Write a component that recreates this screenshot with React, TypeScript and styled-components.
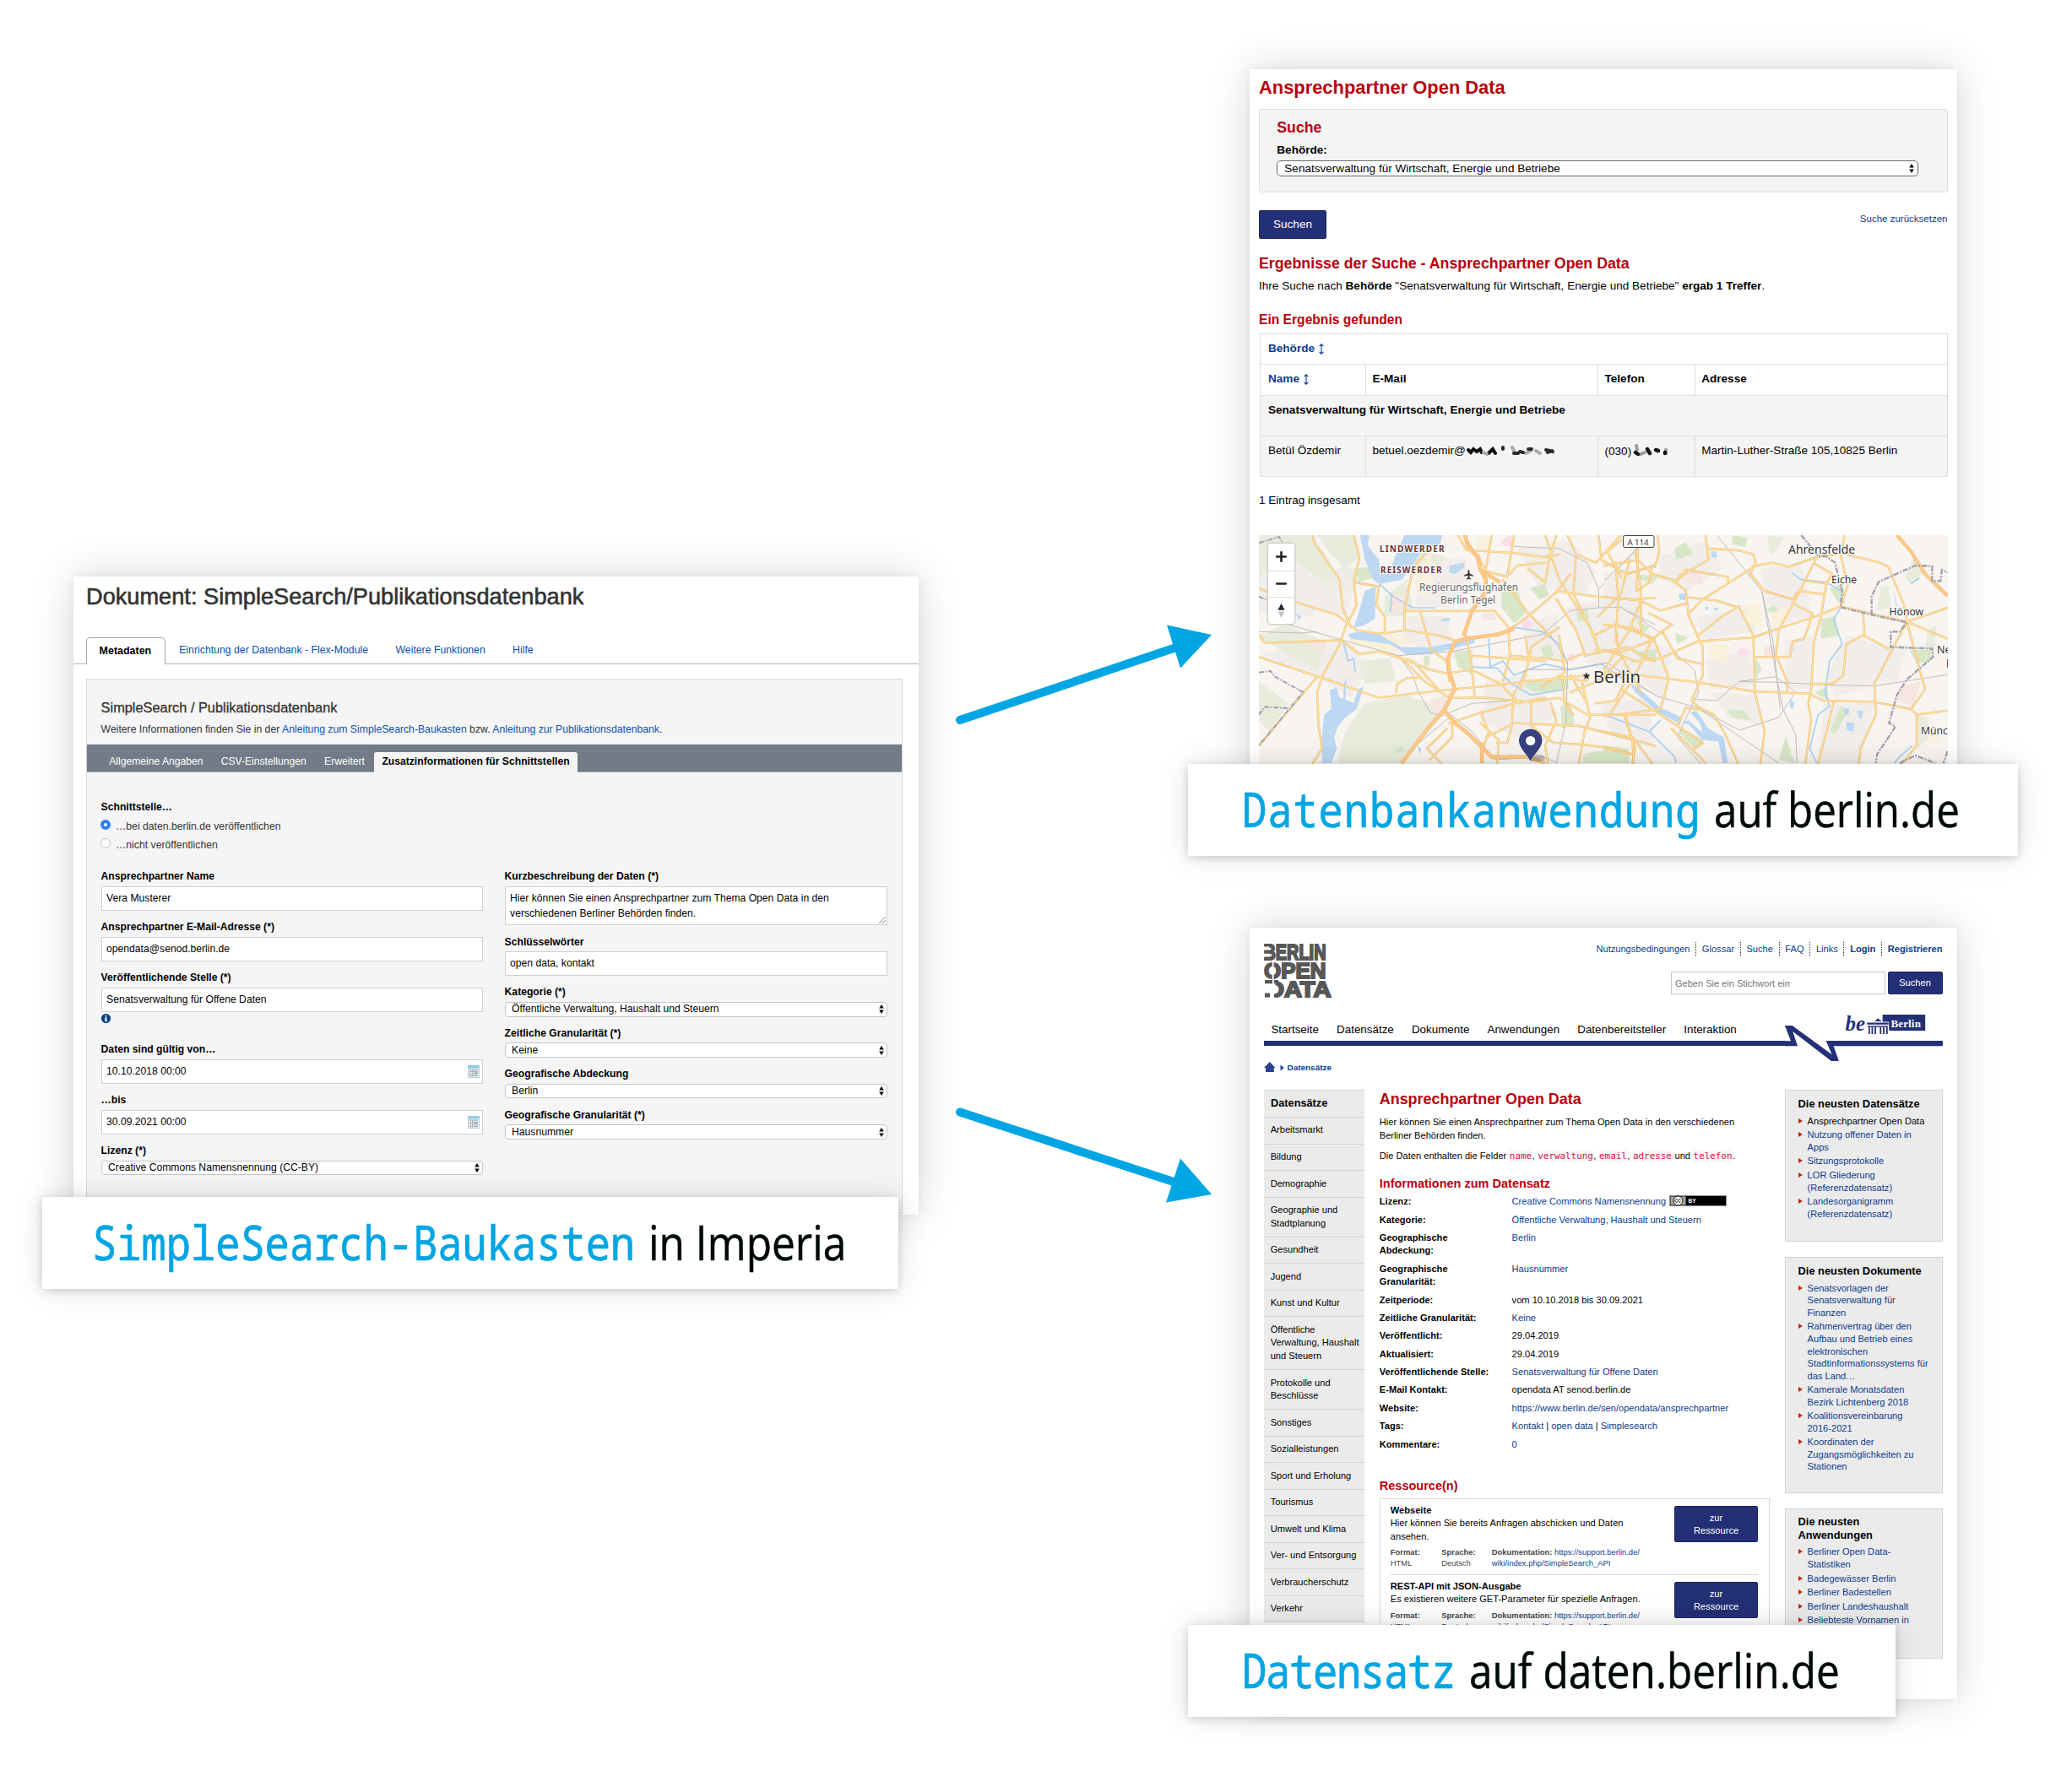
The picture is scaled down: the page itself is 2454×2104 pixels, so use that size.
import React from "react";
import styled, { createGlobalStyle, css } from "styled-components";

const SANS = '"Liberation Sans", Arial, sans-serif';
const CYAN = "#00a5e3";
const NAVY = "#243075";
const RED = "#b8000d";
const LINK = "#0b3b8c";

const GlobalStyle = createGlobalStyle`
  * { box-sizing: border-box; }
  html, body { margin: 0; padding: 0; background: #fff; }
  body { font-family: ${SANS}; color: #000; }
`;

/* ---------- canvas ---------- */

const Canvas = styled.main`
  display: grid;
  grid-template-columns: 1088px 269px 1fr;
  width: 2454px;
  height: 2104px;
  padding-left: 50px;
  overflow: hidden;
`;
const Column = styled.div<{ $top: number }>`
  padding-top: ${p => p.$top}px;
`;
const Card = styled.section<{ $left: number; $width: number; $height: number }>`
  margin-left: ${p => p.$left}px;
  width: ${p => p.$width}px;
  height: ${p => p.$height}px;
  background: #fff;
  box-shadow: 0 0 46px rgba(0, 0, 0, 0.16), 0 0 8px rgba(0, 0, 0, 0.06);
`;
const Banner = styled.h2<{ $width: number; $pull: number; $after?: number }>`
  position: relative;
  display: flex;
  align-items: flex-start;
  width: ${p => p.$width}px;
  height: 109.4px;
  margin: ${p => -p.$pull}px 0 ${p => p.$after || 0}px;
  padding: 13.4px 0 0 60px;
  background: #fff;
  box-shadow: 0 0 36px rgba(0, 0, 0, 0.12), 0 2px 10px rgba(0, 0, 0, 0.16);
  font-size: 56px;
  line-height: 80px;
  font-weight: 400;
  white-space: pre;
`;
const BannerKey = styled.span<{ $width: number; $track: number; $indent: number }>`
  width: ${p => p.$width - p.$indent}px;
  margin-left: ${p => p.$indent}px;
  font-family: "Noto Sans Mono", "DejaVu Sans Mono", monospace;
  color: ${CYAN};
  letter-spacing: ${p => p.$track}px;
  -webkit-text-stroke: 0.7px ${CYAN};
  transform: scaleX(0.87);
  transform-origin: left center;
`;
const BannerRest = styled.span<{ $scale: number }>`
  font-family: "Open Sans", "Noto Sans", sans-serif;
  color: #000a05;
  -webkit-text-stroke: 0.5px #000a05;
  transform: scaleX(${p => p.$scale});
  transform-origin: left center;
`;
const ArrowLayer = styled.svg`
  display: block;
  overflow: visible;
`;

/* ---------- shared bits ---------- */

const Link = styled.a<{ $bright?: boolean }>`
  color: ${p => (p.$bright ? "#0950b4" : LINK)};
  text-decoration: none;
`;
const ArrowsSvg = styled.svg`
  flex: none;
  width: 6px;
  height: 11px;
`;
const UpDown = () => (
  <ArrowsSvg viewBox="0 0 6 11">
    <path d="M3 0 5.8 4.4H.2ZM3 11 .2 6.6h5.6Z" fill="#000" />
  </ArrowsSvg>
);
const Select = styled.div<{ $dark?: boolean; $width: number }>`
  display: flex;
  align-items: center;
  justify-content: space-between;
  width: ${p => p.$width}px;
  height: ${p => (p.$dark ? 19.3 : 17.6)}px;
  padding: 0 ${p => (p.$dark ? 4 : 3)}px 0 ${p => (p.$dark ? 8 : 7.5)}px;
  border: 1px solid ${p => (p.$dark ? "#6b6b6b" : "#c6c6c6")};
  border-radius: ${p => (p.$dark ? 5 : 4)}px;
  background: #fff;
  font-size: ${p => (p.$dark ? 13.57 : 12.15)}px;
  line-height: 17px;
`;

/* ---------- Imperia form ---------- */

const DocTitle = styled.h1`
  margin: 0;
  padding: 3.6px 0 0 15px;
  font-size: 27.2px;
  line-height: 40px;
  font-weight: 400;
  color: #333;
  -webkit-text-stroke: 0.6px #333;
`;
const Tabs = styled.nav`
  display: flex;
  height: 32px;
  margin-top: 28px;
  padding-left: 14.6px;
  border-bottom: 1px solid #b4b4b4;
  font-size: 12.29px;
  line-height: 31px;
`;
const Tab = styled.a<{ $active?: boolean }>`
  padding: 0 16.2px;
  color: #0950b4;
  ${p =>
    p.$active &&
    css`
      height: 32px;
      width: 94.4px;
      padding: 0 15px;
      border: 1px solid #a8a8a8;
      border-bottom: 0;
      border-radius: 5px 5px 0 0;
      background: #fff;
      color: #000;
      font-size: 12.46px;
      font-weight: 700;
    `}
`;
const Panel = styled.div`
  width: 967px;
  height: 634px;
  margin: 17.4px 0 0 14.6px;
  padding-top: 21.2px;
  border: 1px solid #d8d8d8;
  background: #f5f5f5;
`;
const PanelTitle = styled.h3`
  margin: 0;
  padding-left: 17px;
  font-size: 16.35px;
  line-height: 24px;
  font-weight: 400;
  color: #333;
  -webkit-text-stroke: 0.3px #333;
`;
const PanelInfo = styled.p`
  margin: 3.6px 0 8.3px;
  padding-left: 17px;
  font-size: 12.22px;
  line-height: 20px;
  color: #333;
`;
const SubTabs = styled.nav`
  display: flex;
  align-items: flex-end;
  height: 33px;
  padding-left: 16px;
  background: #747b88;
  box-shadow: inset 0 -1px #a3a3a3;
  font-size: 12.12px;
  line-height: 23px;
  color: #fff;
`;
const SubTab = styled.a<{ $active?: boolean }>`
  height: 24px;
  padding: 0 10.7px;
  ${p =>
    p.$active &&
    css`
      margin-left: 0.8px;
      padding: 0 9px;
      border-radius: 3px 3px 0 0;
      background: #f5f5f5;
      color: #000;
      font-size: 12.17px;
      font-weight: 700;
    `}
`;
const Form = styled.div`
  padding: 32px 17px 0;
  font-size: 12.15px;
`;
const Label = styled.label`
  display: block;
  margin-bottom: 2.5px;
  font-size: 12.16px;
  line-height: 18px;
  font-weight: 700;
`;
const RadioRow = styled.div`
  display: flex;
  gap: 6.5px;
  height: 21.6px;
  line-height: 21.6px;
  font-size: 12.22px;
  color: #333;
`;
const Radio = styled.i<{ $on?: boolean }>`
  width: 12px;
  height: 12px;
  margin-top: 2px;
  border-radius: 50%;
  ${p =>
    p.$on
      ? css`
          border: 4px solid #2f7ff5;
          background: #fff;
        `
      : css`
          border: 1px solid #c4c4c4;
          background: #fff;
        `}
`;
const Radios = styled.div`
  margin: 4px 0 17px -1px;
`;
const FormGrid = styled.div`
  display: grid;
  grid-template-columns: 452px 453px;
  column-gap: 26px;
`;
const Field = styled.div`
  margin-bottom: 10.4px;
`;
const Input = styled.div<{ $lines?: number }>`
  display: flex;
  align-items: flex-start;
  justify-content: space-between;
  height: ${p => (p.$lines === 2 ? 46.4 : 29)}px;
  margin-left: 0.5px;
  padding: 5.4px 3px 0 5px;
  border: 1px solid #cfcfcf;
  background: #fff;
  line-height: 17.5px;
  white-space: pre;
`;
const Grip = styled.svg`
  align-self: flex-end;
  width: 8px;
  height: 8px;
  margin: 0 -2px 1px 0;
`;
const InfoLine = styled.div`
  height: 25.4px;
  margin-top: -10.4px;
  margin-bottom: 10.4px;
  padding-top: 2.6px;
  line-height: 0;
`;
const CalSvg = styled.svg`
  width: 14px;
  height: 15px;
  margin-top: 1px;
`;
const Calendar = () => (
  <CalSvg viewBox="0 0 14 15">
    <rect x=".5" y=".5" width="13" height="14" fill="#e9eef1" stroke="#c3ccd2" />
    <rect width="14" height="3.4" fill="#93cbe6" />
    <rect x="3" y="5" width="8" height="7.6" fill="#fff" stroke="#9aa7b0" />
    <path d="M5.7 5v7.6M8.3 5v7.6M3 7.5h8M3 10h8" stroke="#9aa7b0" strokeWidth=".9" />
    <rect x="8.6" y="7.8" width="2" height="2" fill="#7fb4d0" />
  </CalSvg>
);

function ImperiaCard() {
  return (
    <Card $left={37} $width={1001} $height={756}>
      <DocTitle>Dokument: SimpleSearch/Publikationsdatenbank</DocTitle>
      <Tabs>
        <Tab $active>Metadaten</Tab>
        <Tab>Einrichtung der Datenbank - Flex-Module</Tab>
        <Tab>Weitere Funktionen</Tab>
        <Tab>Hilfe</Tab>
      </Tabs>
      <Panel>
        <PanelTitle>SimpleSearch / Publikationsdatenbank</PanelTitle>
        <PanelInfo>
          Weitere Informationen finden Sie in der <Link $bright>Anleitung zum SimpleSearch-Baukasten</Link> bzw.{" "}
          <Link $bright>Anleitung zur Publikationsdatenbank</Link>.
        </PanelInfo>
        <SubTabs>
          <SubTab>Allgemeine Angaben</SubTab>
          <SubTab>CSV-Einstellungen</SubTab>
          <SubTab>Erweitert</SubTab>
          <SubTab $active>Zusatzinformationen für Schnittstellen</SubTab>
        </SubTabs>
        <Form>
          <Label>Schnittstelle…</Label>
          <Radios>
            <RadioRow><Radio $on />…bei daten.berlin.de veröffentlichen</RadioRow>
            <RadioRow><Radio />…nicht veröffentlichen</RadioRow>
          </Radios>
          <FormGrid>
            <div>
              <Field><Label>Ansprechpartner Name</Label><Input>Vera Musterer</Input></Field>
              <Field><Label>Ansprechpartner E-Mail-Adresse (*)</Label><Input>opendata@senod.berlin.de</Input></Field>
              <Field><Label>Veröffentlichende Stelle (*)</Label><Input>Senatsverwaltung für Offene Daten</Input></Field>
              <InfoLine>
                <svg width="11" height="11" viewBox="0 0 11 11">
                  <circle cx="5.5" cy="5.5" r="5.5" fill="#003a85" />
                  <path d="M4.5 2h2v1.6h-2ZM3.9 4.4h2.6v3.5h.7V9H3.9V7.9h.7V5.5h-.7Z" fill="#fff" />
                </svg>
              </InfoLine>
              <Field><Label>Daten sind gültig von…</Label><Input>10.10.2018 00:00<Calendar /></Input></Field>
              <Field><Label>…bis</Label><Input>30.09.2021 00:00<Calendar /></Input></Field>
              <Field><Label>Lizenz (*)</Label><Select $width={452}>Creative Commons Namensnennung (CC-BY)<UpDown /></Select></Field>
            </div>
            <div>
              <Field>
                <Label>Kurzbeschreibung der Daten (*)</Label>
                <Input $lines={2}>
                  {"Hier können Sie einen Ansprechpartner zum Thema Open Data in den\nverschiedenen Berliner Behörden finden."}
                  <Grip viewBox="0 0 8 8"><path d="M0 8 8 0M4 8l4-4" stroke="#777" strokeWidth=".9" /></Grip>
                </Input>
              </Field>
              <Field><Label>Schlüsselwörter</Label><Input>open data, kontakt</Input></Field>
              <Field><Label>Kategorie (*)</Label><Select $width={453}>Öffentliche Verwaltung, Haushalt und Steuern<UpDown /></Select></Field>
              <Field><Label>Zeitliche Granularität (*)</Label><Select $width={453}>Keine<UpDown /></Select></Field>
              <Field><Label>Geografische Abdeckung</Label><Select $width={453}>Berlin<UpDown /></Select></Field>
              <Field><Label>Geografische Granularität (*)</Label><Select $width={453}>Hausnummer<UpDown /></Select></Field>
            </div>
          </FormGrid>
        </Form>
      </Panel>
    </Card>
  );
}

/* ---------- contact database ---------- */

const ContactBody = styled.div`
  padding: 7.2px 11px 0;
  font-size: 13.57px;
  line-height: 20px;
`;
const RedTitle = styled.h3<{ $size: number; $line: number; $m: string }>`
  margin: ${p => p.$m};
  font-size: ${p => p.$size}px;
  line-height: ${p => p.$line}px;
  font-weight: 700;
  color: ${RED};
`;
const SearchBox = styled.div`
  height: 98.5px;
  padding: 8.9px 0 0 20.3px;
  border: 1px solid #dedede;
  border-radius: 3px;
  background: #f4f4f4;
`;
const SearchLabel = styled.div`
  margin: 4.4px 0 2.4px;
  font-weight: 700;
`;
const Actions = styled.div`
  display: flex;
  justify-content: space-between;
  align-items: flex-start;
  margin-top: 21px;
`;
const Button = styled.button<{ $w: number; $h: number; $size: number; $line: number }>`
  flex: none;
  width: ${p => p.$w}px;
  height: ${p => p.$h}px;
  padding: 0;
  border: 1px solid #1b2660;
  border-radius: 2px;
  background: ${NAVY};
  color: #fff;
  font: 400 ${p => p.$size}px/${p => p.$line}px ${SANS};
`;
const Reset = styled(Link)`
  font-size: 11.53px;
`;
const Para = styled.p<{ $m: string }>`
  margin: ${p => p.$m};
`;
const Table = styled.table`
  width: 814.5px;
  margin-left: 1px;
  table-layout: fixed;
  border-collapse: collapse;
`;
const Row = styled.tr<{ $h: number; $shade?: boolean }>`
  height: ${p => p.$h}px;
  background: ${p => (p.$shade ? "#f4f4f4" : "#fff")};
`;
const Cell = styled.td<{ $bold?: boolean; $link?: boolean }>`
  padding: 6.8px 0 0 9px;
  border: 1px solid #dedede;
  vertical-align: top;
  white-space: nowrap;
  font-weight: ${p => (p.$bold ? 700 : 400)};
  color: ${p => (p.$link ? LINK : "#000")};
  & + & { padding-left: 7.5px; }
`;
const SortSvg = styled.svg`
  margin-left: 5px;
  vertical-align: -3px;
`;
const Sort = () => (
  <SortSvg width="6" height="13" viewBox="0 0 6 13">
    <path d="M3 1v11M.6 3.2 3 .8l2.4 2.4M.6 9.8 3 12.2l2.4-2.4" fill="none" stroke={LINK} strokeWidth="1.1" />
  </SortSvg>
);
const Smudge = styled.svg`
  vertical-align: -3px;
  margin-left: 1px;
`;

const MapFrame = styled.div`
  position: relative;
  width: 816px;
  height: 290px;
  overflow: hidden;
  background: #f8f4f0;
`;
const MapSvg = styled.svg`
  display: block;
`;
const ZoomControl = styled.div`
  position: absolute;
  left: 10px;
  top: 9px;
  display: flex;
  flex-direction: column;
  width: 33px;
  border: 1px solid #d2d0cc;
  border-radius: 4px;
  background: #fff;
  box-shadow: 0 0 0 1px rgba(0, 0, 0, 0.06);
`;
const ZoomKey = styled.span`
  display: grid;
  place-items: center;
  height: 31.6px;
  & + & { border-top: 1px solid #ddd; }
`;

const land = {
  grey: [
    "93,150 240,110 300,220 290,330 93,320", "230,430 420,420 480,520 420,620 320,560 93,470", "680,110 830,130 820,240 760,300 650,290",
    "1010,90 1200,60 1290,170 1250,260 1080,220", "1180,300 1420,250 1500,420 1420,560 1260,500", "900,560 1050,540 1160,680 1010,760 880,700",
    "620,330 760,330 780,410 700,470 600,400", "1300,640 1480,620 1500,800 1350,760", "240,190 420,150 440,200 400,330 300,300", "1040,360 1150,320 1180,480 1060,470",
  ],
  green: [
    "93,42 280,42 330,110 380,220 300,190 200,120 93,190", "300,42 430,42 450,120 400,160 350,110", "540,260 620,200 640,300 600,330 540,330",
    "180,360 330,420 300,520 200,470 93,400", "470,640 620,610 700,640 740,690 600,852 370,852 400,740", "380,150 470,190 460,215 400,190", "450,490 560,480 580,560 470,570",
    "640,90 760,120 700,180 650,170", "93,560 200,640 130,740 93,700",
  ],
  park: [
    "955,240 1010,230 1040,320 1000,355 955,300", "1055,560 1190,545 1195,590 1080,600 1030,580", "785,455 850,450 855,540 800,510", "1095,440 1130,430 1140,475 1105,480",
    "1165,650 1200,640 1215,710 1170,730", "1245,820 1360,800 1400,852 1245,852", "1055,230 1110,215 1125,255 1090,270", "430,160 490,155 520,190 450,205", "680,470 700,470 695,510 678,505",
    "560,820 600,790 610,810", "1220,320 1260,300 1265,340 1230,350",
  ],
  pink: ["955,60 990,42 1000,80 960,80", "1025,355 1045,335 1070,355 1055,375 1030,372", "1190,475 1205,460 1222,475 1205,497"],
  rose: ["565,250 610,260 625,310 570,315", "255,430 325,415 330,450 270,445", "700,630 760,610 765,670 715,680", "885,320 930,320 935,345 890,345"],
  sand: ["410,410 520,390 620,400 640,450 560,460 420,430", "870,42 930,60 900,100 860,80", "650,200 700,100 720,180 690,260 650,250"],
  water: [
    "452,42 485,42 480,80 520,130 525,190 500,200 470,130", "610,42 745,42 735,80 680,80 640,150 600,200 520,215 500,200 560,160", "470,240 508,225 505,340 460,365 430,370 450,310",
    "770,150 820,140 825,155 790,180 770,175", "345,590 370,585 380,620 400,625 430,640 445,590 465,580 450,630 440,660 400,690 375,720 360,760 370,800 350,852 318,852 315,780 325,680 350,660",
    "395,570 405,545 400,620 392,640", "410,395 440,385 520,395 600,440 700,440 860,410 860,425 700,465 620,468 560,430 420,410", "655,790 670,800 665,820", "225,325 245,330 235,345",
    "740,340 770,335 772,347 742,348",
  ],
};
const landEast = {
  grey: [
    "0,180 100,150 130,260 40,330 0,300", "190,120 360,60 420,160 300,240 200,200", "330,330 530,300 540,380 350,420", "560,160 700,140 740,330 620,360 570,260",
    "360,480 520,450 530,580 380,590", "640,420 740,400 730,590 650,580", "860,400 1010,440 960,570 820,620 790,540", "780,640 960,640 910,852 760,852", "380,600 540,610 560,720 440,690",
    "980,440 1080,430 1040,560 970,560", "100,420 240,440 220,640 130,560",
  ],
  green: ["1100,120 1130,180 1090,220 1070,190", "580,42 640,50 600,110 585,100", "1150,380 1180,360 1170,480 1140,440", "1110,680 1150,690 1150,770 1110,800", "980,230 1010,220 1020,300 970,310"],
  park: [
    "250,90 290,65 315,110 255,130", "455,42 510,50 500,85 455,75", "120,180 190,190 170,215 130,200", "770,340 820,330 835,400 770,410", "800,230 850,215 855,290 830,280",
    "105,460 190,445 180,490 140,485", "265,720 350,770 325,805 270,750", "645,755 665,820 680,852 620,840", "250,390 300,405 260,430", "570,310 640,330 600,290", "0,790 85,800 90,852 0,852",
    "840,650 870,660 820,750 800,740", "750,600 790,580 800,630 760,610", "440,660 500,665 520,700 450,690", "1085,450 1160,450 1160,490 1110,500", "110,340 160,370 140,390", "540,480 560,520 530,560",
  ],
  pink: ["470,455 485,440 512,450 510,470 485,478"],
  rose: ["280,165 340,170 350,215 290,215", "1045,580 1125,560 1100,650 1040,630", "565,440 610,435 610,475 570,472"],
  sand: ["500,290 555,285 560,370 505,350", "375,430 435,425 440,495 380,490", "590,320 650,300 650,350 600,370", "1150,750 1190,740 1190,780 1155,775"],
  water: [
    "90,568 120,585 200,655 275,690 270,715 190,670 110,600", "305,670 330,668 370,730 425,760 438,852 422,852 405,775 350,770 300,715 275,705 300,700 350,745 340,710",
    "660,630 675,635 672,660 660,655", "850,660 870,655 868,680 855,685", "900,665 920,665 915,695 903,690", "860,705 890,710 885,740 862,735", "265,250 290,250 290,272 268,272",
    "380,100 400,100 400,122 382,120", "1030,235 1040,290 1050,300 1035,290", "355,300 370,295 368,310", "385,302 408,300 400,312",
  ],
};
const roadsWest = [
  "285,42 290,70 380,200 390,300 420,370", "430,42 450,120 430,210 440,290 400,370 380,430 320,540 300,600 305,720 318,800 285,852", "93,230 160,260 370,325 440,380 520,392 620,380 740,400 800,420",
  "93,395 115,425 385,415 450,465 520,455 600,480 700,520 770,535", "93,475 320,550 520,620 640,605 780,590 940,575 1060,560 1260,540", "93,790 300,545",
  "435,210 520,225 510,290 540,330 540,380", "690,100 640,160 610,310 610,380", "610,312 930,310 980,370 985,470", "665,310 705,450 760,490 770,560",
  "800,42 830,95 990,105 1110,120 1160,110", "1000,42 975,190 900,170 870,110", "920,42 900,160", "820,42 850,90", "960,200 1050,320 1130,400", "985,180 1010,150 1110,140",
  "1110,42 1130,100 1110,210 1050,160", "1150,42 1130,110 1160,200 1270,370 1300,450", "1190,42 1220,110 1210,250 1290,410", "1220,110 1290,140 1380,42", "1300,42 1310,130 1400,180 1500,150",
  "1380,190 1330,100 1380,60", "980,380 1050,330 1150,245 1200,180", "1150,240 1290,260 1420,270 1500,265", "1160,370 1060,440 1045,520 1020,590", "1040,400 1050,470",
  "1150,270 1220,380 1250,460 1180,490 1120,480 980,470", "830,400 850,520 860,620", "840,470 980,480 1110,490", "980,390 985,470 960,560", "780,530 850,520 950,570 1020,640",
  "770,620 900,620 1060,635 1160,620 1260,680 1500,680", "580,600 585,570 620,550 665,548", "600,480 680,560 770,620", "770,710 860,680 1000,640 1110,620",
  "780,700 780,760 700,840", "880,670 910,740 890,800", "1000,600 990,730 975,780 940,780", "1060,640 1060,720 1140,780 1230,785 1350,800 1420,820", "900,760 1000,710 1230,720 1350,750 1500,790",
  "1130,640 1150,700 1110,790 1120,852", "940,852 945,770 880,710", "1170,540 1180,640 1210,680", "1240,560 1270,690 1250,740 1230,852", "1200,540 1260,640", "1290,450 1370,460 1480,420",
  "1250,470 1400,440 1500,490", "1290,640 1360,630 1400,550", "1380,480 1300,560 1200,600", "1160,400 1180,530 1100,580", "1360,360 1370,450 1450,600", "1280,400 1360,360 1500,410", "1430,100 1450,230 1450,400",
  "1300,330 1380,250 1410,130", "1390,680 1430,800 1420,852", "740,852 690,800 760,730", "1100,560 1170,550 1260,560", "520,455 640,490 740,600",
];
const roadsEast = [
  "0,150 120,130 170,180 240,200 290,240", "120,90 115,240 160,210 170,150", "40,140 50,270 40,420", "0,262 130,275 200,310 290,285", "190,42 195,100 180,155", "360,42 370,130 300,170 250,210",
  "370,90 470,95 530,110 540,150 600,140 655,155 755,120 845,105", "250,205 290,165 440,190 440,205", "540,150 350,270 300,320", "290,240 300,330 350,440 350,540 310,630 330,650 390,680 430,750 475,852",
  "290,262 400,275 480,300 530,400 535,600", "530,150 520,180 570,240 670,270 690,240 780,252", "755,120 690,250 620,380 610,470", "670,285 740,320 735,340 710,410 670,420 660,475 530,475",
  "480,295 420,330 330,400", "330,420 530,405 630,370 740,335 840,295", "750,145 810,180 790,210 770,330 745,420 735,590 725,640 735,700 715,852", "855,42 840,110 865,220 840,295 1075,350 1220,300",
  "860,110 980,140 1010,155 1065,290 1075,350 1220,410", "1075,350 960,570 965,680 910,800 905,852", "1075,350 1140,590 1090,660 1110,680 1220,665", "920,320 925,400 1010,445", "925,395 860,430 850,540 810,570 735,570",
  "0,530 130,540 330,565 530,597 725,605 780,630 960,635 1090,660", "535,600 570,740 555,852", "610,470 650,560 650,600", "720,205 795,215", "0,360 100,370 180,420 230,550 200,660 0,685",
  "240,360 170,410 120,520 90,570 20,680", "0,450 60,470 110,490 200,480 330,420", "210,390 260,480 350,500", "240,360 160,320", "60,590 200,680 260,720 290,655 350,665", "260,720 350,780 320,800",
  "240,730 360,852", "130,275 90,380 0,520", "0,740 100,760 170,852", "75,680 100,770 105,852", "1110,680 1110,790 1060,852", "815,635 790,740 760,852", "0,800 95,820",
];
const motorways = [
  "825,42 835,80 870,120 880,165 900,200 895,250 850,310 820,400", "880,165 950,210", "770,620 790,590 770,530 765,480 790,420 830,410 940,395 1000,375",
  "600,852 700,720 750,665 775,620", "750,665 790,710 840,750 920,830 1050,830 1110,852", "885,780 885,852",
];

type Land = typeof land;
function LandLayer({ shapes }: { shapes: Land }) {
  const fill: Record<keyof Land, string> = {
    grey: "#f1edea", green: "#e7ecdc", park: "#d9e7c9", pink: "#fddcec", rose: "#f6e6e2", sand: "#faf1dc", water: "#bcd8f2",
  };
  return (
    <>
      {(Object.keys(fill) as (keyof Land)[]).map(kind =>
        shapes[kind].map((points, i) => <polygon key={kind + i} points={points} fill={fill[kind]} />)
      )}
    </>
  );
}
function Roads({ lines }: { lines: string[] }) {
  return (
    <g fill="none" strokeLinejoin="round" strokeLinecap="round">
      {lines.map((points, i) => <polyline key={"c" + i} points={points} stroke="#efb878" strokeWidth="7.2" />)}
      {lines.map((points, i) => <polyline key={"f" + i} points={points} stroke="#fee69c" strokeWidth="3.8" />)}
    </g>
  );
}
const Place = styled.text<{ $size: number; $bold?: boolean; $tone?: string }>`
  font-family: "Noto Sans", sans-serif;
  font-size: ${p => p.$size}px;
  font-weight: ${p => (p.$bold ? 700 : 400)};
  fill: ${p => p.$tone || "#333"};
  stroke: rgba(255, 255, 255, 0.85);
  stroke-width: 2px;
  paint-order: stroke;
`;

function BerlinMap() {
  return (
    <MapFrame>
      <MapSvg width="816" height="290" viewBox="0 0 816 290">
        <g transform="scale(.33333) translate(-93 -42)">
          <LandLayer shapes={land} />
          <g fill="none" stroke="#a9cff2" strokeWidth="5">
            <path d="M520 215 570 260 640 300 720 300M395 430 410 490 430 480 435 530M910 410 915 510 960 490 1000 540 1050 520 1110 500 1200 520 1310 500 1440 590 1500 640" />
            <path d="M850 510 940 515 990 570 1060 610 1180 590M1000 370 1100 385 1160 430 1190 500M560 315 565 250" />
          </g>
          <g fill="none" stroke="#bdbdbd" strokeWidth="3">
            <path d="M93 385 240 390 300 385M200 360 390 415 590 470 780 455 1100 395 1200 310 1300 300 1300 235 1400 130 1440 90M1300 235 1260 140 1160 90 1000 82M590 470 640 540 660 600 700 670 740 685 850 640 990 630 1040 520 1190 520 1330 495 1500 610M1130 400 1190 490 1185 700 1150 852M775 680 850 740 930 840 1100 830 1150 850M1300 300 1380 300 1500 360M650 790 770 690" />
          </g>
        </g>
        <g transform="translate(409 0) scale(.33333) translate(0 -42)">
          <LandLayer shapes={landEast} />
          <g fill="none" stroke="#a9cff2" strokeWidth="5">
            <path d="M840 300 815 340 845 430 800 490 785 600 800 650 760 680 730 800 755 852M665 175 700 200 790 210 840 240M0 680 160 740 200 700M160 740 250 830 255 852M1090 215 1120 195M1095 790 1050 830 1030 852" />
          </g>
          <g fill="none" stroke="#bdbdbd" strokeWidth="3">
            <path d="M400 42 560 240 615 560 635 660 680 750 685 852M560 240 600 420 625 660M0 298 60 298 210 395 260 470 320 520 335 600 310 650 260 760 340 852M110 570 190 615 330 655 480 735 620 690 680 600 610 545 480 562 400 630 320 625M480 562 620 565 800 575 960 578 1220 538M330 655 620 852M120 85 0 205" />
          </g>
        </g>
        <g transform="scale(.33333) translate(-93 -42)"><Roads lines={roadsWest} /></g>
        <g transform="translate(409 0) scale(.33333) translate(0 -42)"><Roads lines={roadsEast} /></g>
        <g transform="scale(.33333) translate(-93 -42)" fill="none" strokeLinejoin="round">
          {motorways.map((points, i) => <polyline key={i} points={points} stroke="#f5b168" strokeWidth="13" />)}
          {motorways.map((points, i) => <polyline key={"f" + i} points={points} stroke="#ffcb8a" strokeWidth="9" />)}
          <path d="M93 70 165 48 178 70M93 530 135 525 150 545 250 600 93 790M93 680 115 652 195 657M93 260 125 275" stroke="#a2a0b0" strokeWidth="6" strokeDasharray="18 5 5 5" />
        </g>
        <g transform="translate(409 0) scale(.33333) translate(0 -42)" fill="none">
          <path d="M1040 42 1090 100 1140 180 1220 258" stroke="#f5b168" strokeWidth="12" />
          <path d="M1040 42 1090 100 1140 180 1220 258" stroke="#ffcb8a" strokeWidth="8" />
          <path d="M700 42 760 115 790 118 820 140 845 240 840 298 950 325 1075 352 1050 385 1018 385 1018 440 1165 445 1168 475 1075 555 1040 610 1012 710 1035 722 970 820 965 852M950 325 950 260 975 208 1105 150 1165 152 1165 205 1195 205 1200 165 1220 175M1050 852 1105 825 1175 852M1220 810 1205 852" stroke="#a2a0b0" strokeWidth="7" strokeDasharray="20 5 6 5" />
        </g>
        <Place x="143" y="20" $size={10} $bold $tone="#633" textLength="76.5">LINDWERDER</Place>
        <Place x="144" y="45" $size={10} $bold $tone="#633" textLength="72.5">REISWERDER</Place>
        <path d="M248.500 41c.8 0 1 1.200 1 2.400v1.800l4.300 2.300v1.300l-4.300-1v2.600l1.600 1.200v.9l-2.600-.6-2.600.6v-.9l1.600-1.200v-2.600l-4.300 1v-1.300l4.300-2.300v-1.800c0-1.200.2-2.400 1-2.400Z" fill="#333" />
        <Place x="190" y="66" $size={11.84} $tone="#666">Regierungsflughafen</Place>
        <Place x="215" y="81" $size={11.84} $tone="#666">Berlin Tegel</Place>
        <rect x="431.500" y=".5" width="36.500" height="14" rx="2" fill="#fff" stroke="#444" />
        <Place x="436.500" y="11.500" $size={9.6}>A 114</Place>
        <path d="m388 162.500 1.300 2.800 3.100.3-2.300 2.100.7 3-2.800-1.600-2.700 1.600.7-3-2.400-2.100 3.100-.3Z" fill="#333" />
        <Place x="396" y="174.500" $size={20.28}>Berlin</Place>
        <Place x="627" y="21.500" $size={14}>Ahrensfelde</Place>
        <Place x="678" y="57" $size={12.2}>Eiche</Place>
        <Place x="746.500" y="95" $size={12.2}>Hönow</Place>
        <Place x="803" y="139.500" $size={12.6}>Ne</Place>
        <Place x="814" y="156.500" $size={12.6}>b</Place>
        <Place x="784" y="235.500" $size={12.2}>Münc</Place>
        <ellipse cx="329" cy="264" rx="10" ry="4.500" fill="rgba(60,60,60,.28)" />
        <path d="M321.500 267.500c-2-6-13.500-15-13.500-24a13.500 13.500 0 0 1 27.500 0c0 9-12 18-14 24Z" fill="#38407f" />
        <circle cx="321.700" cy="243.500" r="5.600" fill="#fff" />
      </MapSvg>
      <ZoomControl>
        <ZoomKey><svg width="13" height="13"><path d="M6.500 1.200v10.600M1.200 6.500h10.600" stroke="#222" strokeWidth="2.600" strokeLinecap="round" /></svg></ZoomKey>
        <ZoomKey><svg width="13" height="13"><path d="M1.200 6.500h10.600" stroke="#222" strokeWidth="2.600" strokeLinecap="round" /></svg></ZoomKey>
        <ZoomKey><svg width="9" height="19"><path d="M4.500 1 8.500 8.700h-8Z" fill="#222" /><path d="M4.500 18 .5 10.600h8Z" fill="#c4c4c4" /></svg></ZoomKey>
      </ZoomControl>
    </MapFrame>
  );
}

function ContactCard() {
  return (
    <Card $left={73} $width={837.5} $height={863}>
      <ContactBody>
        <RedTitle $size={21.89} $line={30} $m="0 0 10.8px">Ansprechpartner Open Data</RedTitle>
        <SearchBox>
          <RedTitle $size={17.7} $line={24} $m="0">Suche</RedTitle>
          <SearchLabel>Behörde:</SearchLabel>
          <Select $dark $width={759.5}>Senatsverwaltung für Wirtschaft, Energie und Betriebe<UpDown /></Select>
        </SearchBox>
        <Actions>
          <Button $w={80} $h={34} $size={13.57} $line={20}>Suchen</Button>
          <Reset>Suche zurücksetzen</Reset>
        </Actions>
        <RedTitle $size={17.77} $line={24} $m="17.3px 0 4.6px">Ergebnisse der Suche - Ansprechpartner Open Data</RedTitle>
        <Para $m="0">Ihre Suche nach <b>Behörde</b> "Senatsverwaltung für Wirtschaft, Energie und Betriebe" <b>ergab 1 Treffer</b>.</Para>
        <RedTitle $size={15.61} $line={22} $m="19.1px 0 5px">Ein Ergebnis gefunden</RedTitle>
        <Table>
          <colgroup><col width="125" /><col width="275" /><col width="114.700" /><col /></colgroup>
          <tbody>
            <Row $h={36.2}><Cell colSpan={4} $bold $link>Behörde<Sort /></Cell></Row>
            <Row $h={36.6}><Cell $bold $link>Name<Sort /></Cell><Cell $bold>E-Mail</Cell><Cell $bold>Telefon</Cell><Cell $bold>Adresse</Cell></Row>
            <Row $h={48} $shade><Cell colSpan={4} $bold>Senatsverwaltung für Wirtschaft, Energie und Betriebe</Cell></Row>
            <Row $h={48} $shade>
              <Cell>Betül Özdemir</Cell>
              <Cell>
                betuel.oezdemir@
                <Smudge width="106" height="15" viewBox="0 0 106 15">
                  <g fill="none" strokeLinecap="round">
                    <path d="M2 7 5 10 8 6 12 9 16 6 18 10M26 11l5-5 3 5" stroke="#111" strokeWidth="4" />
                    <path d="M20 10l4 2M54 4l2 4M70 11l6-3M82 8l5 3" stroke="#aaa" strokeWidth="4" />
                    <path d="M43 4v2M56 11h5M63 9l4 1M73 6h4M94 7l8 2M96 10l5-2" stroke="#2a2a2a" strokeWidth="4" />
                  </g>
                </Smudge>
              </Cell>
              <Cell>
                (030)
                <Smudge width="44" height="18" viewBox="0 0 44 18">
                  <g fill="none" strokeLinecap="round">
                    <path d="M5 4l1 5M10 14l5-2M40 9v4" stroke="#999" strokeWidth="4" />
                    <path d="M4 12l3 2M18 8l3 5M28 9l3 1M39 12v1" stroke="#151515" strokeWidth="4.500" />
                  </g>
                </Smudge>
              </Cell>
              <Cell>Martin-Luther-Straße 105,10825 Berlin</Cell>
            </Row>
          </tbody>
        </Table>
        <Para $m="18.400px 0 30.800px">1 Eintrag insgesamt</Para>
        <BerlinMap />
      </ContactBody>
    </Card>
  );
}

/* ---------- open data portal ---------- */

const Portal = styled.div`
  height: 100%;
  padding: 17px 17px 0;
  font-size: 11.1px;
  line-height: 15.4px;
`;
const PortalHead = styled.header`
  display: flex;
  justify-content: space-between;
  height: 85.5px;
`;
const LogoText = styled.text`
  font-family: ${SANS};
  font-weight: 700;
  font-size: 26px;
  fill: #575757;
  stroke: #575757;
  stroke-width: 2px;
`;
const MetaNav = styled.nav`
  display: flex;
  justify-content: flex-end;
  line-height: 17px;
  height: 17px;
  align-items: center;
  margin-bottom: 17.500px;
`;
const MetaLink = styled(Link)<{ $bold?: boolean }>`
  height: 17px;
  padding: 0 6.700px;
  border-right: 1px dotted #333;
  font-weight: ${p => (p.$bold ? 700 : 400)};
  &:last-child { padding-right: 0; border: 0; }
`;
const SearchRow = styled.div`
  display: flex;
  justify-content: flex-end;
  gap: 3px;
`;
const SearchField = styled.div`
  width: 253.500px;
  height: 27px;
  padding-left: 4px;
  border: 1px solid #c4c4c4;
  line-height: 26.500px;
  font-size: 11.020px;
  color: #757575;
`;
const NavBand = styled.div`
  display: flex;
  height: 55.500px;
`;
const MainNav = styled.nav`
  display: flex;
  gap: 21.100px;
  width: 617px;
  height: 37.300px;
  padding: 8.100px 0 0 8.400px;
  border-bottom: 6px solid ${NAVY};
  font-size: 13.400px;
  line-height: 20px;
`;
const Crumbs = styled.div`
  display: flex;
  align-items: center;
  height: 14px;
  margin: 0.500px 0 19.400px;
  font-size: 9.950px;
  line-height: 14px;
  font-weight: 700;
`;
const CrumbIcons = styled.svg`
  margin-right: 3.500px;
`;
const PortalGrid = styled.div`
  display: grid;
  grid-template-columns: 119px 462px 187.400px;
  column-gap: 17.800px;
  align-items: start;
`;
const Side = styled.ul`
  margin: 0;
  padding: 0;
  list-style: none;
  border-top: 1px solid #d8d8d8;
  background: #ebebeb;
`;
const SideItem = styled.li<{ $head?: boolean }>`
  padding: 7.500px 0 7.450px 7.700px;
  border-bottom: 1px solid #d4d4d4;
  line-height: 15.600px;
  white-space: pre-line;
  ${p =>
    p.$head &&
    css`
      padding: 0 0 0 8px;
      font-size: 12.750px;
      font-weight: 700;
      line-height: 30.600px;
    `}
`;
const Article = styled.article`
  margin-top: -1.500px;
`;
const Code = styled.code`
  padding: 1px 0.500px;
  border-radius: 2px;
  background: #f7f7f9;
  color: #dd1144;
  font: 10.900px "DejaVu Sans Mono", monospace;
  line-height: 13px;
`;
const Facts = styled.dl`
  display: grid;
  grid-template-columns: 156.800px 1fr;
  row-gap: 5.970px;
  margin: 0;
`;
const Term = styled.dt`
  width: 131px;
  font-weight: 700;
`;
const Value = styled.dd`
  display: flex;
  gap: 4px;
  margin: 0;
`;
const Resources = styled.div`
  padding: 6px 13px 0 12px;
  border: 1px solid #d9d9d9;
`;
const Resource = styled.div`
  display: flex;
  justify-content: space-between;
  align-items: flex-start;
  padding-bottom: 7px;
  line-height: 15.500px;
  & + & {
    padding-top: 5.500px;
    border-top: 1px solid #d9d9d9;
  }
`;
const ResButton = styled(Button)`
  margin-top: 2.600px;
`;
const ResMeta = styled.div`
  display: grid;
  grid-template-columns: 60.500px 59.500px 190px;
  margin-top: 4px;
  font-size: 9.410px;
  line-height: 13px;
  color: #444;
`;
const Aside = styled.aside`
  display: grid;
  gap: 18px;
`;
const NewsBox = styled.div<{ $h: number }>`
  height: ${p => p.$h}px;
  padding: 7.700px 0 0 15px;
  border: 1px solid #d2d2d2;
  background: #ebebeb;
`;
const NewsTitle = styled.h4`
  margin: 0 0 5.300px;
  font-size: 12.830px;
  line-height: 15.400px;
  white-space: pre-line;
`;
const NewsItem = styled.div<{ $plain?: boolean }>`
  display: flex;
  gap: 6px;
  margin-bottom: 2px;
  line-height: 14.550px;
  white-space: pre;
  color: ${p => (p.$plain ? "#000" : LINK)};
`;
const Bullet = styled.svg`
  margin-top: 4px;
`;

const side = [
  "Arbeitsmarkt", "Bildung", "Demographie", "Geographie und\nStadtplanung", "Gesundheit", "Jugend", "Kunst und Kultur",
  "Öffentliche\nVerwaltung, Haushalt\nund Steuern", "Protokolle und\nBeschlüsse", "Sonstiges", "Sozialleistungen", "Sport und Erholung",
  "Tourismus", "Umwelt und Klima", "Ver- und Entsorgung", "Verbraucherschutz", "Verkehr",
];
const news = [
  { h: 180, title: "Die neusten Datensätze", items: ["Ansprechpartner Open Data", "Nutzung offener Daten in\nApps", "Sitzungsprotokolle", "LOR Gliederung\n(Referenzdatensatz)", "Landesorganigramm\n(Referenzdatensatz)"] },
  { h: 279.3, title: "Die neusten Dokumente", items: ["Senatsvorlagen der\nSenatsverwaltung für\nFinanzen", "Rahmenvertrag über den\nAufbau und Betrieb eines\nelektronischen\nStadtinformationssystems für\ndas Land…", "Kamerale Monatsdaten\nBezirk Lichtenberg 2018", "Koalitionsvereinbarung\n2016-2021", "Koordinaten der\nZugangsmöglichkeiten zu\nStationen"] },
  { h: 178.4, title: "Die neusten\nAnwendungen", items: ["Berliner Open Data-\nStatistiken", "Badegewässer Berlin", "Berliner Badestellen", "Berliner Landeshaushalt", "Beliebteste Vornamen in"] },
];

const OpenDataLogo = () => (
  <svg width="82" height="66" viewBox="0 0 82 66">
    <LogoText x="-0.500" y="20.500" textLength="74" lengthAdjust="spacingAndGlyphs">BERLIN</LogoText>
    <LogoText x="0" y="42.600" textLength="73.500" lengthAdjust="spacingAndGlyphs">OPEN</LogoText>
    <LogoText x="3" y="64.500" textLength="76.500" lengthAdjust="spacingAndGlyphs">DATA</LogoText>
    <path d="M0 5.500h6.500v4H0ZM0 13.800h6.500v3.700H0Z" fill="#fff" />
    <path d="M10.700 21v8M10.700 37v8" stroke="#fff" strokeWidth="1.800" />
    <path d="M0 44.300h13.500V66H0Z" fill="#fff" />
    <path d="M1 45h9v4.300H1ZM1 60.500h6v5H1ZM12 45h5v4.300h-5ZM12 61.200h5v4.300h-5Z" fill="#575757" />
  </svg>
);
const SerifMark = styled.text<{ $size: number; $italic?: boolean; $fill: string }>`
  font-family: "Liberation Serif", serif;
  font-size: ${p => p.$size}px;
  font-weight: 700;
  font-style: ${p => (p.$italic ? "italic" : "normal")};
  fill: ${p => p.$fill};
`;
const BeBerlin = () => (
  <svg width="187" height="55.500" viewBox="0 0 187 55.500">
    <path d="M0 31.300h7L0 13h8.700L55.700 47.300 48.700 31h138.300v6.300H57.700L64 55.300h-8.700L9.300 20 15 37.300H0Z" fill={NAVY} />
    <SerifMark x="71.500" y="19" $size={26} $italic $fill={NAVY} textLength="23.500" lengthAdjust="spacingAndGlyphs">be</SerifMark>
    <path d="M97.300 9.500h25.500v2.300H97.300ZM98 13.300h24v1.500H98ZM99 15h1.800v8H99ZM102.600 15h1.800v8h-1.800ZM106.200 15h1.800v8h-1.800ZM112.500 15h1.800v8h-1.800ZM116.200 15h1.800v8h-1.800ZM120 15h1.800v8H120ZM107 8h7V6.500h-7Z" fill={NAVY} />
    <circle cx="110.300" cy="6" r="1.600" fill={NAVY} />
    <path d="M115.700 0h50.600v19h-43V8.500h-7.600Z" fill={NAVY} />
    <SerifMark x="125.500" y="14.500" $size={13} $fill="#fff" textLength="35.500">Berlin</SerifMark>
  </svg>
);
const CcBadge = () => (
  <svg width="68" height="13" viewBox="0 0 68 13">
    <rect width="68" height="13" fill="#000" />
    <rect x=".5" y=".5" width="67" height="12" fill="none" stroke="#8f8f8f" />
    <rect x="1.500" y="1.500" width="18" height="10" fill="#aaa99f" />
    <circle cx="10.500" cy="6.500" r="5.500" fill="#fff" stroke="#000" strokeWidth="1" />
    <path d="M9.800 5.300a1.700 1.700 0 1 0 0 2.400M13.600 5.300a1.700 1.700 0 1 0 0 2.400" fill="none" stroke="#000" strokeWidth="1" />
    <text x="22.500" y="9" fontSize="6.500" fontWeight="700" fontFamily={SANS} fill="#fff">BY</text>
  </svg>
);

function ResourceEntry({ title, text }: { title: string; text: React.ReactNode }) {
  return (
    <Resource>
      <div>
        <b>{title}</b>
        <div>{text}</div>
        <ResMeta>
          <div><b>Format:</b><br />HTML</div>
          <div><b>Sprache:</b><br />Deutsch</div>
          <div><b>Dokumentation:</b> <Link>https://support.berlin.de/<br />wiki/index.php/SimpleSearch_API</Link></div>
        </ResMeta>
      </div>
      <ResButton $w={98.5} $h={42.6} $size={11.15} $line={15}>zur<br />Ressource</ResButton>
    </Resource>
  );
}

function PortalCard() {
  return (
    <Card $left={73} $width={837.5} $height={914}>
      <Portal>
        <PortalHead>
          <OpenDataLogo />
          <div>
            <MetaNav>
              <MetaLink>Nutzungsbedingungen</MetaLink>
              <MetaLink>Glossar</MetaLink>
              <MetaLink>Suche</MetaLink>
              <MetaLink>FAQ</MetaLink>
              <MetaLink>Links</MetaLink>
              <MetaLink $bold>Login</MetaLink>
              <MetaLink $bold>Registrieren</MetaLink>
            </MetaNav>
            <SearchRow>
              <SearchField>Geben Sie ein Stichwort ein</SearchField>
              <Button $w={65} $h={27} $size={11.1} $line={20}>Suchen</Button>
            </SearchRow>
          </div>
        </PortalHead>
        <NavBand>
          <MainNav>
            <span>Startseite</span><span>Datensätze</span><span>Dokumente</span><span>Anwendungen</span><span>Datenbereitsteller</span><span>Interaktion</span>
          </MainNav>
          <BeBerlin />
        </NavBand>
        <Crumbs>
          <CrumbIcons width="24" height="13" viewBox="0 0 24 13">
            <path d="M6.800 0 13.500 7H11.800V12H2V7H0Z" fill="#2b4291" />
            <path d="M19.500 3.500v7l4.300-3.500Z" fill="#2b4291" />
          </CrumbIcons>
          <Link>Datensätze</Link>
        </Crumbs>
        <PortalGrid>
          <Side>
            <SideItem $head>Datensätze</SideItem>
            {side.map(name => <SideItem key={name}>{name}</SideItem>)}
          </Side>
          <Article>
            <RedTitle $size={17.91} $line={24} $m="0 0 8.400px">Ansprechpartner Open Data</RedTitle>
            <Para $m="0 0 9.400px">Hier können Sie einen Ansprechpartner zum Thema Open Data in den verschiedenen<br />Berliner Behörden finden.</Para>
            <Para $m="0 0 14.500px">
              Die Daten enthalten die Felder <Code>name</Code>, <Code>verwaltung</Code>, <Code>email</Code>, <Code>adresse</Code> und <Code>telefon</Code>.
            </Para>
            <RedTitle $size={14.51} $line={20} $m="0 0 3.900px">Informationen zum Datensatz</RedTitle>
            <Facts>
              <Term>Lizenz:</Term><Value><Link>Creative Commons Namensnennung</Link><CcBadge /></Value>
              <Term>Kategorie:</Term><Value><Link>Öffentliche Verwaltung, Haushalt und Steuern</Link></Value>
              <Term>Geographische<br />Abdeckung:</Term><Value><Link>Berlin</Link></Value>
              <Term>Geographische<br />Granularität:</Term><Value><Link>Hausnummer</Link></Value>
              <Term>Zeitperiode:</Term><Value>vom 10.10.2018 bis 30.09.2021</Value>
              <Term>Zeitliche Granularität:</Term><Value><Link>Keine</Link></Value>
              <Term>Veröffentlicht:</Term><Value>29.04.2019</Value>
              <Term>Aktualisiert:</Term><Value>29.04.2019</Value>
              <Term>Veröffentlichende Stelle:</Term><Value><Link>Senatsverwaltung für Offene Daten</Link></Value>
              <Term>E-Mail Kontakt:</Term><Value>opendata AT senod.berlin.de</Value>
              <Term>Website:</Term><Value><Link>https://www.berlin.de/sen/opendata/ansprechpartner</Link></Value>
              <Term>Tags:</Term><Value><span><Link>Kontakt</Link> | <Link>open data</Link> | <Link>Simplesearch</Link></span></Value>
              <Term>Kommentare:</Term><Value><Link>0</Link></Value>
            </Facts>
            <RedTitle $size={14.51} $line={20} $m="31.400px 0 4.300px">Ressource(n)</RedTitle>
            <Resources>
              <ResourceEntry title="Webseite" text={<>Hier können Sie bereits Anfragen abschicken und Daten<br />ansehen.</>} />
              <ResourceEntry title="REST-API mit JSON-Ausgabe" text="Es existieren weitere GET-Parameter für spezielle Anfragen." />
            </Resources>
          </Article>
          <Aside>
            {news.map(box => (
              <NewsBox key={box.title} $h={box.h}>
                <NewsTitle>{box.title}</NewsTitle>
                {box.items.map(item => (
                  <NewsItem key={item} $plain={item === "Ansprechpartner Open Data"}>
                    <Bullet width="5" height="6" viewBox="0 0 5 6"><path d="M0 0v6l5-3Z" fill="#c4260c" /></Bullet>
                    <span>{item}</span>
                  </NewsItem>
                ))}
              </NewsBox>
            ))}
          </Aside>
        </PortalGrid>
      </Portal>
    </Card>
  );
}

export default function App() {
  return (
    <>
      <GlobalStyle />
      <Canvas>
        <Column $top={683}>
          <ImperiaCard />
          <Banner $width={1014} $pull={21}>
            <BannerKey $width={658} $track={0} $indent={-1}>SimpleSearch-Baukasten</BannerKey>
            <BannerRest $scale={0.886}>in Imperia</BannerRest>
          </Banner>
        </Column>
        <Column $top={735}>
          <ArrowLayer width="300" height="700" viewBox="0 0 300 700">
            <g stroke={CYAN} strokeWidth="10" strokeLinecap="round">
              <path d="M-1 118 258 31M-1 582.500 258 667" />
            </g>
            <path d="M244 5.500 297 17 260 56.500ZM260 637.500 297 680 243 689.500Z" fill={CYAN} />
          </ArrowLayer>
        </Column>
        <Column $top={81.5}>
          <ContactCard />
          <Banner $width={983} $pull={39.8} $after={85.4}>
            <BannerKey $width={563} $track={1.1} $indent={4}>Datenbankanwendung</BannerKey>
            <BannerRest $scale={0.88}>auf berlin.de</BannerRest>
          </Banner>
          <PortalCard />
          <Banner $width={838} $pull={88.8}>
            <BannerKey $width={273} $track={-1.4} $indent={4}>Datensatz</BannerKey>
            <BannerRest $scale={0.884}>auf daten.berlin.de</BannerRest>
          </Banner>
        </Column>
      </Canvas>
    </>
  );
}
